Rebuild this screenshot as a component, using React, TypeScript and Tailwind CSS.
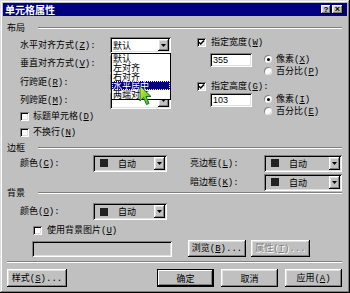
import React from "react";

const raised =
  "shadow-[inset_-1px_-1px_#000,inset_1px_1px_#fff,inset_-2px_-2px_#808080,inset_2px_2px_#dfdfdf]";
const sunken =
  "shadow-[inset_1px_1px_#808080,inset_-1px_-1px_#fff,inset_2px_2px_#000,inset_-2px_-2px_#dfdfdf]";

function K({ t, k, colon, dots }: { t: string; k: string; colon?: boolean; dots?: boolean }) {
  return (
    <span className="whitespace-nowrap">
      {t}
      <span className="font-['Liberation_Mono',monospace]">
        (<span className="underline">{k}</span>)
        {colon ? ":" : ""}
        {dots ? "..." : ""}
      </span>
    </span>
  );
}

function Arrow() {
  return (
    <div className={`w-[11px] h-full bg-[#c0c0c0] ${raised} flex items-center justify-center shrink-0`}>
      <svg width="5" height="3" viewBox="0 0 5 3">
        <polygon points="0,0 5,0 2.5,3" fill="#000" />
      </svg>
    </div>
  );
}

function Check({ on }: { on?: boolean }) {
  return (
    <div className={`relative w-[9px] h-[9px] bg-white ${sunken} shrink-0`}>
      {on && (
        <svg className="absolute left-[1px] top-[1px]" width="7" height="7" viewBox="0 0 7 7">
          <path d="M1 3.2 L2.8 5 L6 1.5" stroke="#000" strokeWidth="1.5" fill="none" />
        </svg>
      )}
    </div>
  );
}

function Radio({ on }: { on?: boolean }) {
  return (
    <div className="relative w-[8px] h-[8px] rounded-full bg-white shadow-[inset_1px_1px_#808080,inset_-1px_-1px_#dfdfdf] shrink-0 flex items-center justify-center">
      {on && <div className="w-[3px] h-[3px] rounded-full bg-black" />}
    </div>
  );
}

function Header({ t }: { t: string }) {
  return (
    <div className="h-[10px] flex items-center">
      <span className="ml-[4px]">{t}</span>
      <div className="flex-1 ml-[13px] mr-[5px] mt-[2px] h-[2px] border-t border-t-[#808080] border-b border-b-white" />
    </div>
  );
}

function WhiteCombo({ text }: { text?: string }) {
  return (
    <div className={`w-[61px] h-[16px] bg-white ${sunken} p-[2px] flex`}>
      <span className="flex-1 pl-[1px] flex items-center">{text}</span>
      <Arrow />
    </div>
  );
}

function ColorCombo({ wide }: { wide?: boolean }) {
  return (
    <div className={`${wide ? "w-[78px]" : "w-[74px]"} h-[17px] bg-[#c0c0c0] ${sunken} p-[2px] flex`}>
      <div className="flex-1 flex items-center pl-[5px]">
        <div className="w-[8px] h-[8px] bg-[#222]" />
        <span className="ml-[10px]">自动</span>
      </div>
      <Arrow />
    </div>
  );
}

function Btn({ children, cls, def }: { children: React.ReactNode; cls: string; def?: boolean }) {
  return (
    <div
      className={`${cls} bg-[#c0c0c0] flex items-center justify-center ${
        def
          ? "shadow-[inset_0_0_0_1px_#000,inset_-2px_-2px_#000,inset_2px_2px_#fff,inset_-3px_-3px_#808080]"
          : raised
      }`}
    >
      {children}
    </div>
  );
}

export default function App() {
  const items = ["默认", "左对齐", "右对齐", "水平居中", "两端对齐"];
  return (
    <div className="relative w-[350px] h-[293px] bg-[#c0c0c0] p-[3px] flex flex-col font-['Noto_Sans_CJK_SC',sans-serif] text-[9px] leading-none text-black overflow-hidden shadow-[inset_-1px_-1px_#000,inset_1px_1px_#dfdfdf,inset_-2px_-2px_#808080,inset_2px_2px_#fff]">
      {/* title bar */}
      <div className="h-[13px] bg-[#000080] flex items-center pl-[2px] pr-[4px] shrink-0">
        <span className="text-white font-bold text-[10px]">单元格属性</span>
        <div className="ml-auto flex gap-[1px]">
          <div className={`w-[10px] h-[9px] bg-[#c0c0c0] ${raised} flex items-center justify-center text-[8px] font-bold font-['Liberation_Sans',sans-serif]`}>
            ?
          </div>
          <div className={`w-[11px] h-[9px] bg-[#c0c0c0] ${raised} flex items-center justify-center text-[9px] font-bold font-['Liberation_Sans',sans-serif]`}>
            ×
          </div>
        </div>
      </div>

      {/* 布局 */}
      <div className="mt-[6px]">
        <Header t="布局" />
      </div>
      <div className="mt-[5px] flex items-start">
        <div className="w-[194px] pl-[17px] flex flex-col">
          <div className="flex flex-col gap-[2.5px]">
            <div className="h-[16px] flex items-center">
              <div className="w-[90px]"><K t="水平对齐方式" k="Z" colon /></div>
              <WhiteCombo text="默认" />
            </div>
            <div className="h-[16px] flex items-center">
              <div className="w-[90px]"><K t="垂直对齐方式" k="V" colon /></div>
              <WhiteCombo />
            </div>
            <div className="h-[16px] flex items-center">
              <div className="w-[90px]"><K t="行跨距" k="R" colon /></div>
              <WhiteCombo />
            </div>
            <div className="h-[16px] flex items-center">
              <div className="w-[90px]"><K t="列跨距" k="M" colon /></div>
              <WhiteCombo />
            </div>
          </div>
          <div className="mt-[3px] flex flex-col gap-[5.5px]">
            <div className="h-[10px] flex items-center">
              <Check />
              <span className="ml-[4px]"><K t="标题单元格" k="D" /></span>
            </div>
            <div className="h-[10px] flex items-center">
              <Check />
              <span className="ml-[4px]"><K t="不换行" k="N" /></span>
            </div>
          </div>
        </div>
        <div className="flex-1 flex flex-col">
          <div className="h-[11px] flex items-center">
            <Check on />
            <span className="ml-[5px]"><K t="指定宽度" k="W" /></span>
          </div>
          <div className="mt-[5px] flex items-start">
            <div className={`ml-[13px] w-[42px] h-[14px] bg-white ${sunken} flex items-center pl-[3px] font-['Liberation_Sans',sans-serif]`}>355</div>
            <div className="ml-[12px] flex flex-col">
              <div className="h-[12px] flex items-center">
                <Radio on />
                <span className="ml-[4px]"><K t="像素" k="X" /></span>
              </div>
              <div className="h-[12px] flex items-center">
                <Radio />
                <span className="ml-[4px]"><K t="百分比" k="P" /></span>
              </div>
            </div>
          </div>
          <div className="mt-[3.5px] h-[11px] flex items-center">
            <Check on />
            <span className="ml-[5px]"><K t="指定高度" k="G" colon /></span>
          </div>
          <div className="mt-[1.5px] flex items-start">
            <div className={`ml-[13px] w-[42px] h-[14px] bg-white ${sunken} flex items-center pl-[3px] font-['Liberation_Sans',sans-serif]`}>103</div>
            <div className="ml-[12px] flex flex-col">
              <div className="h-[12px] flex items-center">
                <Radio on />
                <span className="ml-[4px]"><K t="像素" k="I" /></span>
              </div>
              <div className="h-[12px] flex items-center">
                <Radio />
                <span className="ml-[4px]"><K t="百分比" k="E" /></span>
              </div>
            </div>
          </div>
        </div>
      </div>

      {/* 边框 */}
      <div className="mt-[5px]">
        <Header t="边框" />
      </div>
      <div className="mt-[2px] flex items-start">
        <div className="pl-[17px] h-[18px] flex items-center">
          <div className="w-[73px]"><K t="颜色" k="C" colon /></div>
          <ColorCombo />
        </div>
        <div className="ml-[23px] flex flex-col gap-[1px]">
          <div className="h-[18px] flex items-center">
            <div className="w-[74px]"><K t="亮边框" k="L" colon /></div>
            <ColorCombo wide />
          </div>
          <div className="h-[18px] flex items-center">
            <div className="w-[74px]"><K t="暗边框" k="K" colon /></div>
            <ColorCombo wide />
          </div>
        </div>
      </div>

      {/* 背景 */}
      <div className="mt-[-4px]">
        <Header t="背景" />
      </div>
      <div className="mt-[6px] pl-[17px] h-[17px] flex items-center">
        <div className="w-[73px]"><K t="颜色" k="O" colon /></div>
        <ColorCombo />
      </div>
      <div className="mt-[5.5px] pl-[30px] h-[10px] flex items-center">
        <Check />
        <span className="ml-[5px]"><K t="使用背景图片" k="U" /></span>
      </div>
      <div className="mt-[4.5px] flex items-center">
        <div className={`ml-[29px] w-[140px] h-[16px] bg-[#c0c0c0] ${sunken}`} />
        <Btn cls="ml-[16px] w-[58px] h-[17px]">
          <K t="浏览" k="B" dots />
        </Btn>
        <Btn cls="ml-[5px] w-[59px] h-[17px]">
          <span className="text-[#808080] [text-shadow:1px_1px_0_#fff]">
            <K t="属性" k="T" dots />
          </span>
        </Btn>
      </div>
      <div className="mt-[4px] ml-[4px] mr-[5px] h-[2px] border-t border-t-[#808080] border-b border-b-white" />
      <div className="mt-[6px] flex items-center">
        <Btn cls="ml-[4px] w-[60px] h-[18px]">
          <K t="样式" k="S" dots />
        </Btn>
        <Btn cls="ml-auto w-[57px] h-[18px]" def>
          确定
        </Btn>
        <Btn cls="ml-[7px] w-[57px] h-[18px]">取消</Btn>
        <Btn cls="ml-[7px] mr-[5px] w-[57px] h-[18px]">
          <K t="应用" k="A" />
        </Btn>
      </div>

      {/* dropdown list (overlay) */}
      <div className="absolute left-[111px] top-[53px] w-[60px] bg-white border border-black flex flex-col">
        {items.map((it, i) => (
          <div
            key={it}
            className={`h-[9px] flex items-center pl-[1px] ${
              i === 3 ? "bg-[#000080] text-white outline-1 outline-dotted outline-[#ffff80] -outline-offset-1" : ""
            }`}
          >
            {it}
          </div>
        ))}
      </div>

      {/* mouse cursor */}
      <svg className="absolute left-[139px] top-[85px]" width="14" height="22" viewBox="0 0 14 22">
        <defs>
          <linearGradient id="cg" x1="0" y1="0" x2="1" y2="1">
            <stop offset="0" stopColor="#e8f030" />
            <stop offset="1" stopColor="#30b030" />
          </linearGradient>
        </defs>
        <polygon
          points="1,1 1,16 4.5,12.5 7.5,19.5 10,18.5 7,11.5 12,11.5"
          fill="url(#cg)"
          stroke="#0a7a1a"
          strokeWidth="1"
          strokeLinejoin="round"
        />
      </svg>
    </div>
  );
}
